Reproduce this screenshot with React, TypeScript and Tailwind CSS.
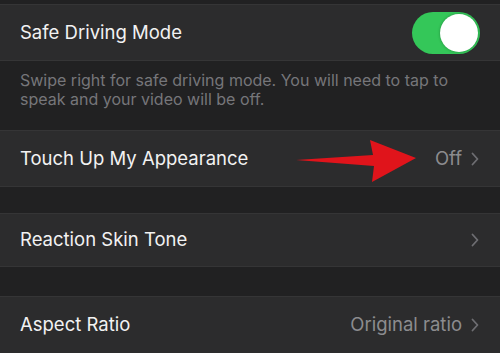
import React from "react";

function Chevron() {
  return (
    <svg width="8" height="14" viewBox="0 0 8 14" className="ml-[9px]">
      <path d="M1.5 1.5 L6.5 7 L1.5 12.5" fill="none" stroke="#6e6e72" strokeWidth="1.8" strokeLinecap="round" strokeLinejoin="round" />
    </svg>
  );
}

function Row({ label, value, className = "" }: { label: string; value?: string; className?: string }) {
  return (
    <div className={`flex items-center justify-between bg-[#2c2c2d] border-y border-[#353536] pl-5 pr-[21px] ${className}`}>
      <span className="text-[18.5px] text-[#f2f2f2]">{label}</span>
      <div className="flex items-center">
        {value && <span className="text-[18.5px] text-[#8c8c8f]">{value}</span>}
        <Chevron />
      </div>
    </div>
  );
}

export default function App() {
  return (
    <div className="relative w-[500px] h-[353px] overflow-hidden bg-[#212122] font-['Inter',sans-serif]">
      <div className="h-[4px]" />
      <div className="flex items-center justify-between bg-[#2c2c2d] border-y border-[#353536] pl-5 pr-[20px] h-[57px]">
        <span className="text-[18.5px] text-[#f2f2f2]">Safe Driving Mode</span>
        <div className="flex items-center justify-end w-[68px] h-[42px] rounded-full bg-[#34c759] px-[2px]">
          <div className="w-[38px] h-[38px] rounded-full bg-white shadow-[0_0_3px_rgba(0,0,0,0.3)]" />
        </div>
      </div>
      <div className="h-[69px] pl-5 pr-4 pt-[10px] text-[16px] leading-[19px] text-[#76767a]">
        Swipe right for safe driving mode. You will need to tap to speak and your video will be off.
      </div>
      <Row label="Touch Up My Appearance" value="Off" className="h-[57px]" />
      <div className="h-[26px]" />
      <Row label="Reaction Skin Tone" className="h-[54px]" />
      <div className="h-[29px]" />
      <Row label="Aspect Ratio" value="Original ratio" className="h-[58px]" />

      <svg className="absolute left-[294px] top-[138px]" width="126" height="46" viewBox="0 0 126 46">
        <path d="M2 22 L79 17 L76 2 L122 20 L78 44 L80 28 Z" fill="#e0141b" />
      </svg>
    </div>
  );
}
